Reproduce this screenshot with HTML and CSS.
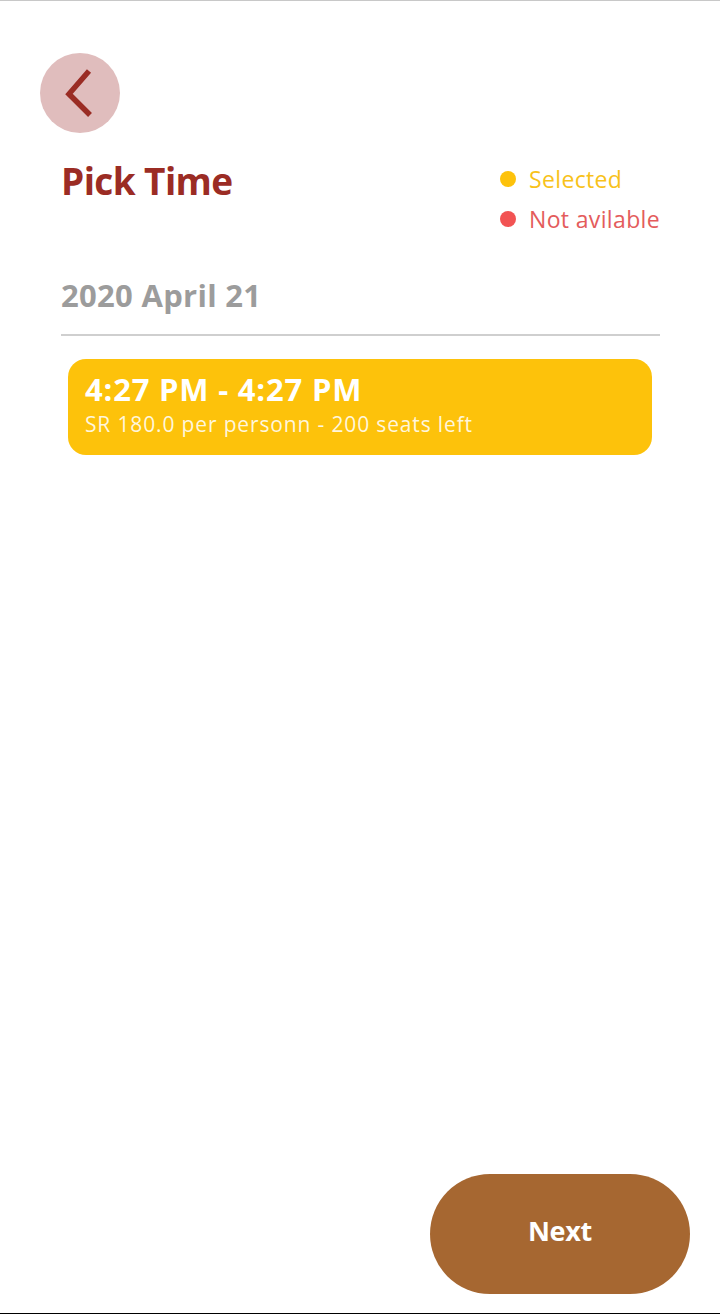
FILE: index.html
```html
<!DOCTYPE html>
<html>
<head>
<meta charset="utf-8">
<link rel="stylesheet" href="styles.css">
</head>
<body>
<div class="screen">
  <button class="back" aria-label="Back">
    <svg width="80" height="80" viewBox="0 0 80 80">
      <polyline points="49,18 29,41 50,62" fill="none" stroke="#9a2c24" stroke-width="5.5" stroke-linecap="butt" stroke-linejoin="miter"/>
    </svg>
  </button>
  <div class="header">
    <h1 class="title">Pick Time</h1>
    <ul class="legend">
      <li class="legend-item selected"><span class="dot"></span>Selected</li>
      <li class="legend-item unavailable"><span class="dot"></span>Not avilable</li>
    </ul>
  </div>
  <div class="date">2020 April 21</div>
  <div class="slots">
    <div class="slot">
      <div class="slot-time">4:27 PM - 4:27 PM</div>
      <div class="slot-info">SR 180.0 per personn - 200 seats left</div>
    </div>
  </div>
  <div class="footer">
    <button class="next">Next</button>
  </div>
</div>
</body>
</html>
```
FILE: styles.css
```css
* { box-sizing: border-box; }
html, body { margin: 0; padding: 0; background: #fff; }
body { font-family: "Open Sans", "Noto Sans", sans-serif; }
.screen {
  height: 1314px;
  border-top: 1px solid #c8c8c8;
  border-bottom: 1px solid #000;
  display: flex;
  flex-direction: column;
}
.back {
  width: 80px;
  height: 80px;
  margin: 52px 0 0 40px;
  padding: 0;
  border: 0;
  border-radius: 50%;
  background: #e0bdbd;
  display: flex;
}
.header {
  display: flex;
  justify-content: space-between;
  align-items: flex-start;
  padding: 0 60px 0 61px;
  margin-top: 22px;
}
.title {
  margin: 0;
  font-size: 37px;
  line-height: 52px;
  font-weight: 700;
  color: #9b2c24;
  letter-spacing: -0.6px;
}
.legend {
  list-style: none;
  margin: 0;
  padding: 0;
  display: flex;
  flex-direction: column;
  gap: 10px;
  margin-top: 9px;
}
.legend-item {
  display: flex;
  align-items: center;
  gap: 13px;
  font-size: 23px;
  line-height: 30px;
  letter-spacing: 0.35px;
}
.dot {
  width: 16px;
  height: 16px;
  border-radius: 50%;
}
.selected { color: #f8c21a; }
.selected .dot { background: #fdc20b; }
.unavailable { color: #e45c5c; }
.unavailable .dot { background: #f25353; }
.date {
  margin: 41px 60px 0 61px;
  padding-bottom: 19px;
  border-bottom: 2px solid #cfcfcf;
  font-size: 31px;
  line-height: 40px;
  font-weight: 700;
  color: #9c9c9c;
  letter-spacing: 0.3px;
}
.slots {
  padding: 23px 68px 0 68px;
}
.slot {
  background: #fdc20b;
  border-radius: 18px;
  height: 96px;
  padding: 12px 17px 0 17px;
}
.slot-time {
  font-size: 31px;
  line-height: 36px;
  font-weight: 700;
  color: #fff;
  letter-spacing: 0.8px;
}
.slot-info {
  margin-top: 3px;
  font-size: 21px;
  line-height: 28px;
  color: #fff6dc;
  letter-spacing: 0.85px;
}
.footer {
  margin-top: auto;
  display: flex;
  justify-content: flex-end;
  padding: 0 30px 19px 0;
}
.next {
  width: 260px;
  height: 120px;
  border: 0;
  border-radius: 60px;
  background: #a66731;
  color: #fff;
  padding: 0 0 8px 0;
  font-family: "Open Sans", "Noto Sans", sans-serif;
  font-size: 27px;
  font-weight: 700;
  letter-spacing: -0.3px;
}
```
